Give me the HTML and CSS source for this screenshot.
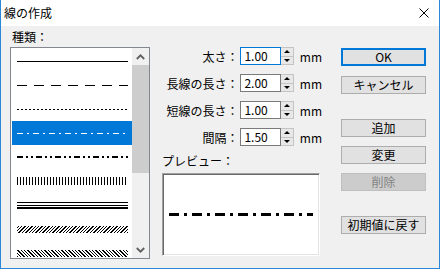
FILE: index.html
```html
<!DOCTYPE html>
<html lang="ja">
<head>
    <meta charset="UTF-8">
    <title>線の作成</title>
    <link rel="stylesheet" href="styles.css">
</head>
<body>
    <div class="window">
        <div class="titlebar">
            <span class="title">線の作成</span>
            <svg class="close" width="10" height="10" viewBox="0 0 10 10">
                <path d="M0.5 0.5 L9.5 9.5 M9.5 0.5 L0.5 9.5" stroke="#000" stroke-width="1" fill="none"/>
            </svg>
        </div>

        <div class="dialog">
            <div class="col-list">
                <div class="caption">種類：</div>
                <div class="listbox">
                    <div class="list-items">
                        <div class="item"><span class="ln ln-solid"></span></div>
                        <div class="item"><span class="ln ln-dash"></span></div>
                        <div class="item"><span class="ln ln-dot"></span></div>
                        <div class="item selected"><span class="ln ln-dashdot"></span></div>
                        <div class="item"><span class="ln ln-dashdotdot"></span></div>
                        <div class="item"><span class="ln ln-vbar"></span></div>
                        <div class="item"><span class="ln ln-triple"></span></div>
                        <div class="item"><span class="ln ln-hatch"></span></div>
                        <div class="item"><span class="ln ln-hatch2"></span></div>
                    </div>
                    <div class="scrollbar">
                        <div class="sb-btn">
                            <svg width="9" height="6" viewBox="0 0 9 6"><polyline points="0.8,5 4.5,1.3 8.2,5" stroke="#606060" stroke-width="1.8" fill="none"/></svg>
                        </div>
                        <div class="sb-track"><div class="sb-thumb"></div></div>
                        <div class="sb-btn">
                            <svg width="9" height="6" viewBox="0 0 9 6"><polyline points="0.8,1 4.5,4.7 8.2,1" stroke="#606060" stroke-width="1.8" fill="none"/></svg>
                        </div>
                    </div>
                </div>
            </div>

            <div class="col-form">
                <div class="field">
                    <label class="field-label">太さ：</label>
                    <div class="num-input focused">1.00</div>
                    <div class="spin"><span class="spin-up"></span><span class="spin-down"></span></div>
                    <span class="unit">mm</span>
                </div>
                <div class="field">
                    <label class="field-label">長線の長さ：</label>
                    <div class="num-input">2.00</div>
                    <div class="spin"><span class="spin-up"></span><span class="spin-down"></span></div>
                    <span class="unit">mm</span>
                </div>
                <div class="field">
                    <label class="field-label">短線の長さ：</label>
                    <div class="num-input">1.00</div>
                    <div class="spin"><span class="spin-up"></span><span class="spin-down"></span></div>
                    <span class="unit">mm</span>
                </div>
                <div class="field">
                    <label class="field-label">間隔：</label>
                    <div class="num-input">1.50</div>
                    <div class="spin"><span class="spin-up"></span><span class="spin-down"></span></div>
                    <span class="unit">mm</span>
                </div>

                <div class="caption preview-caption">プレビュー：</div>
                <div class="preview"><span class="preview-line"></span></div>
            </div>

            <div class="col-buttons">
                <div class="btn-group">
                    <button class="btn default">OK</button>
                    <button class="btn">キャンセル</button>
                </div>
                <div class="btn-group tight">
                    <button class="btn">追加</button>
                    <button class="btn">変更</button>
                    <button class="btn" disabled>削除</button>
                </div>
                <div class="btn-group">
                    <button class="btn">初期値に戻す</button>
                </div>
            </div>
        </div>
    </div>
</body>
</html>
```

FILE: styles.css
```css
* {
    box-sizing: border-box;
}

body {
    margin: 0;
    font-family: "Noto Sans CJK JP", "Noto Sans", sans-serif;
    font-size: 12px;
    color: #000;
    background: #fff;
}

.window {
    width: 440px;
    height: 269px;
    border: 1px solid #2b88d8;
    border-top: none;
    display: flex;
    flex-direction: column;
    background: #f0f0f0;
}

.titlebar {
    height: 26px;
    background: #fff;
    display: flex;
    align-items: center;
    justify-content: space-between;
    padding: 0 10px 0 3px;
}

.title {
    line-height: 14px;
}

.close {
    display: block;
}

.dialog {
    flex: 1;
    display: flex;
    padding-left: 9px;
}

.caption {
    line-height: 14px;
}

/* list of line types */
.col-list {
    width: 140px;
    padding-top: 4px;
}

.col-list .caption {
    margin: 0 0 3px 2px;
}

.listbox {
    height: 212px;
    border: 1px solid #828790;
    background: #fff;
    display: flex;
    overflow: hidden;
}

.list-items {
    width: 121px;
    padding: 1px 0 0 1px;
    overflow: hidden;
}

.item {
    height: 24px;
    display: flex;
    align-items: center;
    padding: 0 4px 0 5px;
}

.item.selected {
    background: #0078d7;
}

.ln {
    display: block;
    width: 111px;
    height: 1px;
}

.ln-solid {
    background: #000;
}

.ln-dash {
    background: repeating-linear-gradient(90deg, #000 0 10px, transparent 10px 17px);
}

.ln-dot {
    background: repeating-linear-gradient(90deg, #000 0 2px, transparent 2px 4px);
}

.ln-dashdot {
    background: repeating-linear-gradient(90deg, #fff 0 6px, transparent 6px 10px, #fff 10px 12px, transparent 12px 16px);
}

.ln-dashdotdot {
    height: 2px;
    background: repeating-linear-gradient(90deg, #000 0 6px, transparent 6px 9px, #000 9px 11px, transparent 11px 14px, #000 14px 16px, transparent 16px 19px);
}

.ln-vbar {
    height: 8px;
    background: repeating-linear-gradient(90deg, #000 0 1px, transparent 1px 3px);
}

.ln-triple {
    height: 7px;
    background: linear-gradient(#000 0 1.5px, transparent 1.5px 2.75px, #000 2.75px 4.25px, transparent 4.25px 5.5px, #000 5.5px 7px);
}

.ln-hatch {
    height: 7px;
    background: repeating-linear-gradient(-45deg, #000 0 1px, transparent 1px 2.4px);
}

.ln-hatch2 {
    height: 7px;
    background: repeating-linear-gradient(45deg, #000 0 1px, transparent 1px 2.4px);
}

.scrollbar {
    width: 17px;
    display: flex;
    flex-direction: column;
    background: #f0f0f0;
}

.sb-btn {
    height: 17px;
    display: flex;
    align-items: center;
    justify-content: center;
}

.sb-track {
    flex: 1;
}

.sb-thumb {
    height: 108px;
    background: #cdcdcd;
}

/* numeric fields */
.col-form {
    width: 160px;
    margin-left: 12px;
    padding-top: 21px;
}

.field {
    display: flex;
    align-items: center;
    height: 18px;
    margin-bottom: 9px;
}

.field-label {
    width: 79px;
    text-align: right;
    white-space: nowrap;
}

.num-input {
    width: 42px;
    height: 18px;
    margin-left: 2px;
    border: 1px solid #7a7a7a;
    background: #fff;
    padding-left: 3px;
    line-height: 16px;
}

.num-input.focused {
    border-color: #0078d7;
}

.spin {
    width: 13px;
    height: 18px;
    display: flex;
    flex-direction: column;
    border: 1px solid #c4c4c4;
    border-left: none;
    background: #e8e8e8;
}

.spin-up, .spin-down {
    flex: 1;
    display: flex;
    align-items: center;
    justify-content: center;
}

.spin-up {
    border-bottom: 1px solid #c4c4c4;
}

.spin-up::after, .spin-down::after {
    content: "";
    border-left: 3px solid transparent;
    border-right: 3px solid transparent;
}

.spin-up::after {
    border-bottom: 3px solid #000;
}

.spin-down::after {
    border-top: 3px solid #000;
}

.unit {
    margin-left: 6px;
}

.preview-caption {
    margin: -1px 0 5px 0;
}

.preview {
    width: 158px;
    height: 83px;
    background: #fff;
    border: 1px solid;
    border-color: #a0a0a0 #fff #fff #a0a0a0;
    box-shadow: inset 1px 1px 0 #696969, inset -1px -1px 0 #e3e3e3;
    display: flex;
    align-items: center;
    padding-left: 6px;
}

.preview-line {
    display: block;
    width: 144px;
    height: 3px;
    background: repeating-linear-gradient(90deg, #000 0 10px, transparent 10px 15px, #000 15px 18px, transparent 18px 23px);
}

/* buttons */
.col-buttons {
    width: 85px;
    margin-left: 19px;
    padding-top: 22px;
    display: flex;
    flex-direction: column;
    gap: 25px;
}

.btn-group {
    display: flex;
    flex-direction: column;
    gap: 10px;
}

.btn-group.tight {
    gap: 9px;
}

.btn {
    height: 18px;
    width: 85px;
    padding: 0;
    font: inherit;
    line-height: 16px;
    color: #000;
    background: #e1e1e1;
    border: 1px solid #adadad;
}

.btn.default {
    border: 2px solid #0078d7;
    line-height: 14px;
}

.btn:disabled {
    background: #cccccc;
    border-color: #bfbfbf;
    color: #838383;
}
```
